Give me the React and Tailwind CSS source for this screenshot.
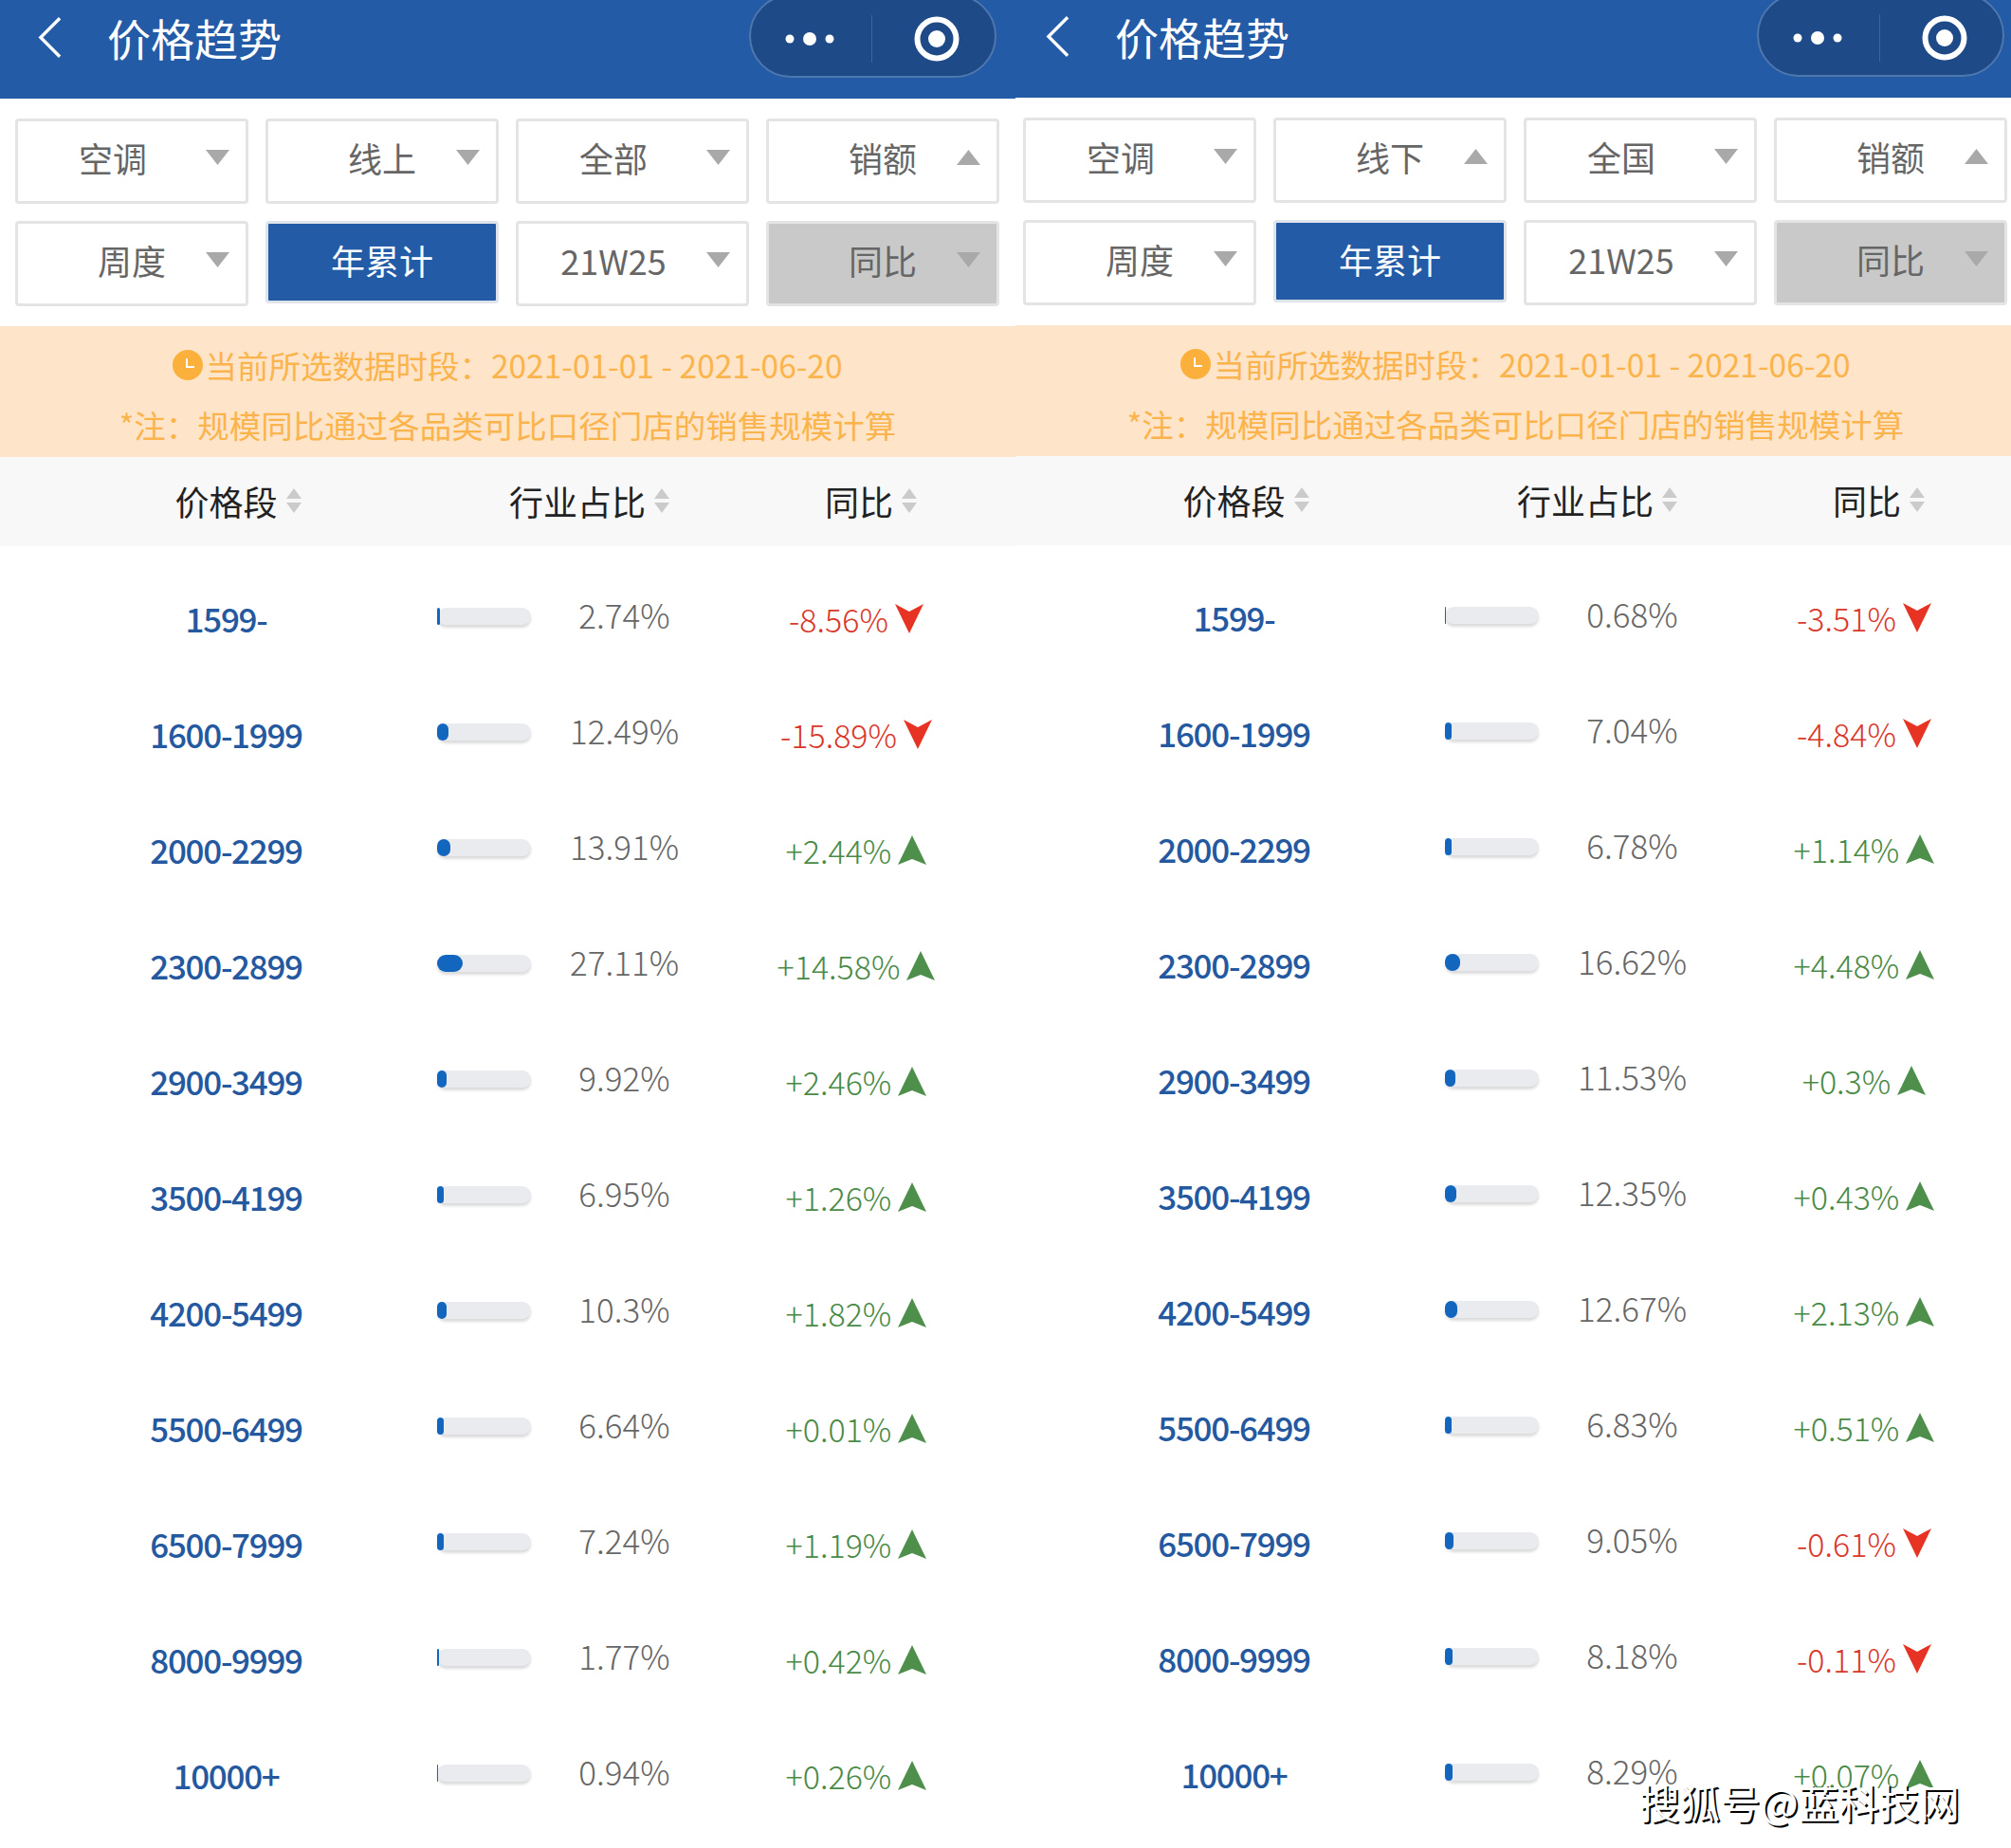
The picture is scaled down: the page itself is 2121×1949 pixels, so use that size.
import React from "react";

const leftRows = [
  ["1599-", 2.74, -8.56, "-8.56%"],
  ["1600-1999", 12.49, -15.89, "-15.89%"],
  ["2000-2299", 13.91, 2.44, "+2.44%"],
  ["2300-2899", 27.11, 14.58, "+14.58%"],
  ["2900-3499", 9.92, 2.46, "+2.46%"],
  ["3500-4199", 6.95, 1.26, "+1.26%"],
  ["4200-5499", 10.3, 1.82, "+1.82%"],
  ["5500-6499", 6.64, 0.01, "+0.01%"],
  ["6500-7999", 7.24, 1.19, "+1.19%"],
  ["8000-9999", 1.77, 0.42, "+0.42%"],
  ["10000+", 0.94, 0.26, "+0.26%"],
];

const rightRows = [
  ["1599-", 0.68, -3.51, "-3.51%"],
  ["1600-1999", 7.04, -4.84, "-4.84%"],
  ["2000-2299", 6.78, 1.14, "+1.14%"],
  ["2300-2899", 16.62, 4.48, "+4.48%"],
  ["2900-3499", 11.53, 0.3, "+0.3%"],
  ["3500-4199", 12.35, 0.43, "+0.43%"],
  ["4200-5499", 12.67, 2.13, "+2.13%"],
  ["5500-6499", 6.83, 0.51, "+0.51%"],
  ["6500-7999", 9.05, -0.61, "-0.61%"],
  ["8000-9999", 8.18, -0.11, "-0.11%"],
  ["10000+", 8.29, 0.07, "+0.07%"],
];

const Caret = ({ up }) => (
  <svg viewBox="0 0 25 16" className="absolute right-[17px] top-[30px] h-4 w-[25px]">
    <polygon points={up ? "12.5,0 25,16 0,16" : "0,0 25,0 12.5,16"} fill="#a9a9a9" />
  </svg>
);

const Select = ({ label, up, shift, grey }) => (
  <div
    className={`relative flex h-[90px] w-[246px] items-center justify-center rounded-[4px] border-[3px] border-[#e4e4e4] pb-2 text-[36px] text-[#666] ${
      shift ? "pr-10" : ""
    } ${grey ? "bg-[#c9c9c9]" : "bg-white"}`}
  >
    {label}
    <Caret up={up} />
  </div>
);

const SortArrows = () => (
  <svg viewBox="0 0 16 26" className="absolute left-full top-1/2 ml-[9px] h-[26px] w-4 -translate-y-1/2">
    <polygon points="8,0 16,11 0,11" fill="#cbcbcb" />
    <polygon points="0,15 16,15 8,26" fill="#cbcbcb" />
  </svg>
);

const HeadCell = ({ children, className }) => (
  <div className={`flex items-center justify-center pb-[2px] ${className || ""}`}>
    <span className="relative">
      {children}
      <SortArrows />
    </span>
  </div>
);

const Trend = ({ down }) => (
  <svg viewBox="0 0 30 31" className="mb-1 ml-[7px] h-[31px] w-[30px] shrink-0">
    {down ? (
      <polygon points="0,0 15,8 30,0 15,31" fill="#e63323" />
    ) : (
      <polygon points="15,0 30,31 15,25 0,31" fill="#4f8f4c" />
    )}
  </svg>
);

const Row = ({ range, share, delta, text }) => (
  <div className="grid h-[122px] grid-cols-[445px_296px_294px] items-center">
    <div className="pb-1 text-center text-[35px] font-medium tracking-[-1.3px] text-[#24589f]">{range}</div>
    <div className="flex items-center pb-2">
      <div className="h-[18px] w-[99px] shrink-0 rounded-full bg-[#e9ebef] shadow-[0_3px_3px_rgba(0,0,0,0.14)]">
        <div className="h-full rounded-full bg-[#1366be]" style={{ width: `${share}%` }} />
      </div>
      <div className="flex-1 pb-1 text-center text-[35px] font-light leading-[40px] text-[#666]">{share}%</div>
    </div>
    <div className="flex items-center justify-center pr-[2px]">
      <span className={`pb-[2px] text-[34px] font-light leading-[40px] ${delta < 0 ? "text-[#d9382a]" : "text-[#4a8a47]"}`}>
        {text}
      </span>
      <Trend down={delta < 0} />
    </div>
  </div>
);

const Panel = ({ channel, channelUp, region, rows, className }) => (
  <div className={`w-[1071px] shrink-0 bg-white ${className}`}>
    {/* Title bar */}
    <div className="flex h-[104px] items-start overflow-hidden bg-[#235ba6] text-white">
      <svg viewBox="0 0 26 46" className="ml-10 mt-[17px] h-[45px] w-[25px] shrink-0">
        <polyline points="24,2 3,23 24,44" fill="none" stroke="#fff" strokeWidth="3.5" />
      </svg>
      <div className="ml-[48px] mt-[10px] text-[46px] leading-[58px]">价格趋势</div>
      <div className="ml-auto mr-[20px] mt-[-6px] flex h-[88px] w-[261px] items-center rounded-full border-2 border-[#4e77ae] bg-[#1e4a87]">
        <svg viewBox="0 0 52 16" className="ml-[36px] mt-[6px] h-4 w-[52px]">
          <circle cx="5" cy="8" r="4.5" fill="#fff" />
          <circle cx="26" cy="8" r="7" fill="#fff" />
          <circle cx="47" cy="8" r="4.5" fill="#fff" />
        </svg>
        <div className="ml-[39px] mt-[6px] h-[50px] w-px bg-[#3a659f]" />
        <svg viewBox="0 0 50 50" className="ml-[43px] mt-[6px] h-[50px] w-[50px]">
          <circle cx="25" cy="25" r="20.5" fill="none" stroke="#fff" strokeWidth="6" />
          <circle cx="25" cy="25" r="9" fill="#fff" />
        </svg>
      </div>
    </div>

    {/* Filters */}
    <div className="grid grid-cols-[repeat(4,246px)] gap-x-[18px] gap-y-[18px] pb-[21px] pl-4 pt-[21px]">
      <Select label="空调" shift />
      <Select label={channel} up={channelUp} />
      <Select label={region} shift />
      <Select label="销额" up />
      <Select label="周度" />
      <div className="flex h-[87px] items-center justify-center rounded-[4px] border-[3px] border-[#dfe3ea] bg-[#235ba6] pb-[6px] text-[36px] text-white">
        年累计
      </div>
      <Select label="21W25" shift />
      <Select label="同比" grey />
    </div>

    {/* Notice */}
    <div className="flex h-[138px] flex-col items-center bg-[#fee4c8] pt-[18px] text-[33.5px] text-[#fbb44c]">
      <div className="flex h-[46px] items-center leading-[46px]">
        <svg viewBox="0 0 32 32" className="mr-[2px] h-8 w-8 shrink-0">
          <circle cx="16" cy="16" r="16" fill="#fbb03b" />
          <polyline points="15,9 15,18 23,18" fill="none" stroke="#fff" strokeWidth="2" />
        </svg>
        {"当前所选数据时段\uFF1A2021-01-01 - 2021-06-20"}
      </div>
      <div className="mt-[17px] h-[46px] leading-[46px]">{"*注\uFF1A规模同比通过各品类可比口径门店的销售规模计算"}</div>
    </div>

    {/* Table head */}
    <div className="grid h-[94px] grid-cols-[445px_296px_294px] bg-[#f8f8f8] pl-4 text-[36px] text-[#222]">
      <HeadCell>价格段</HeadCell>
      <HeadCell>行业占比</HeadCell>
      <HeadCell className="pl-[4px]">同比</HeadCell>
    </div>

    {/* Table body */}
    <div className="pl-4 pt-[17px]">
      {rows.map((r) => (
        <Row key={r[0]} range={r[0]} share={r[1]} delta={r[2]} text={r[3]} />
      ))}
    </div>
  </div>
);

export default function App() {
  return (
    <div className="relative h-[1949px] w-[2121px] overflow-hidden bg-white font-['Noto_Sans_CJK_SC',sans-serif]">
      <div className="flex items-start">
        <Panel channel="线上" region="全部" rows={leftRows} className="relative z-10" />
        <Panel channel="线下" channelUp region="全国" rows={rightRows} className="-ml-2 -mt-px" />
      </div>
      <div className="absolute left-[1729px] top-[1876px] z-20 text-[42.5px] leading-[48px] text-white [text-shadow:2px_2px_0_#000]">
        搜狐号@蓝科技网
      </div>
    </div>
  );
}
